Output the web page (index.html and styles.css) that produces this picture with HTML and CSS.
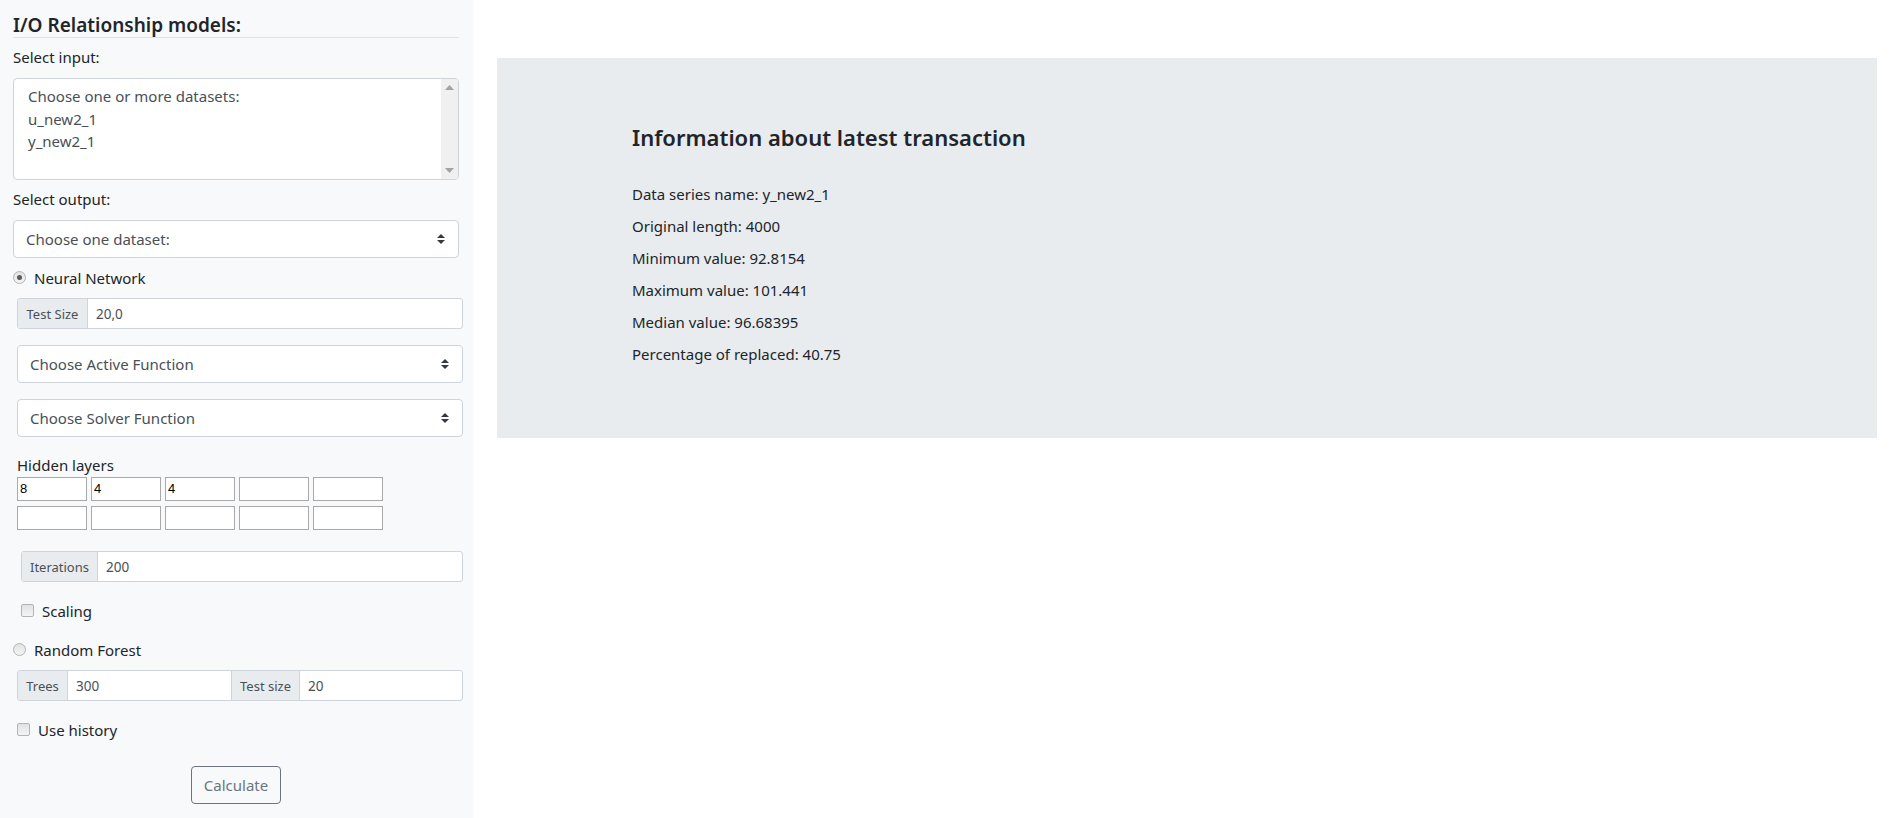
FILE: index.html
```html
<!DOCTYPE html>
<html>
<head>
<meta charset="utf-8">
<link rel="stylesheet" href="styles.css">
</head>
<body>
<div class="page">
  <aside class="sidebar">
    <h2 class="side-title">I/O Relationship models:</h2>
    <div class="label lbl-input">Select input:</div>
    <div class="multi">
      <div class="multi-opts">
        <div class="opt">Choose one or more datasets:</div>
        <div class="opt">u_new2_1</div>
        <div class="opt">y_new2_1</div>
      </div>
      <div class="scrollbar">
        <svg class="sb-arrow" width="9" height="5" viewBox="0 0 9 5"><polygon points="0,5 9,5 4.5,0" fill="#a3a3a3"/></svg>
        <svg class="sb-arrow" width="9" height="5" viewBox="0 0 9 5"><polygon points="0,0 9,0 4.5,5" fill="#a3a3a3"/></svg>
      </div>
    </div>
    <div class="label lbl-output">Select output:</div>
    <div class="select sel-output">
      <span>Choose one dataset:</span>
      <svg width="8" height="10" viewBox="0 0 4 5"><path fill="#343a40" d="M2 0L0 2h4zm0 5L0 3h4z"/></svg>
    </div>

    <div class="radio-row rr-nn">
      <span class="radio checked"></span>
      <span>Neural Network</span>
    </div>

    <div class="nested">
      <div class="igroup ig-test">
        <span class="addon addon-test">Test Size</span>
        <span class="ival">20,0</span>
      </div>
      <div class="select sel-fn sel-act">
        <span>Choose Active Function</span>
        <svg width="8" height="10" viewBox="0 0 4 5"><path fill="#343a40" d="M2 0L0 2h4zm0 5L0 3h4z"/></svg>
      </div>
      <div class="select sel-fn sel-solver">
        <span>Choose Solver Function</span>
        <svg width="8" height="10" viewBox="0 0 4 5"><path fill="#343a40" d="M2 0L0 2h4zm0 5L0 3h4z"/></svg>
      </div>
      <div class="hl-label">Hidden layers</div>
      <div class="hl-grid">
        <div class="hl-input">8</div>
        <div class="hl-input">4</div>
        <div class="hl-input">4</div>
        <div class="hl-input"></div>
        <div class="hl-input"></div>
        <div class="hl-input"></div>
        <div class="hl-input"></div>
        <div class="hl-input"></div>
        <div class="hl-input"></div>
        <div class="hl-input"></div>
      </div>
      <div class="igroup ig-iter">
        <span class="addon addon-iter">Iterations</span>
        <span class="ival">200</span>
      </div>
      <div class="check-row cr-scaling">
        <span class="checkbox"></span>
        <span>Scaling</span>
      </div>
    </div>

    <div class="radio-row rr-rf">
      <span class="radio"></span>
      <span>Random Forest</span>
    </div>

    <div class="nested">
      <div class="igroup ig-trees">
        <span class="addon addon-trees">Trees</span>
        <span class="ival ival-trees">300</span>
        <span class="addon addon-tsize">Test size</span>
        <span class="ival">20</span>
      </div>
      <div class="check-row cr-history">
        <span class="checkbox"></span>
        <span>Use history</span>
      </div>
    </div>

    <div class="btn-row">
      <button class="btn-calc">Calculate</button>
    </div>
  </aside>

  <main class="main">
    <section class="jumbo">
      <h4 class="jumbo-title">Information about latest transaction</h4>
      <p class="info">Data series name: y_new2_1</p>
      <p class="info">Original length: 4000</p>
      <p class="info">Minimum value: 92.8154</p>
      <p class="info">Maximum value: 101.441</p>
      <p class="info">Median value: 96.68395</p>
      <p class="info">Percentage of replaced: 40.75</p>
    </section>
  </main>
</div>
</body>
</html>
```

FILE: styles.css
```css
html, body {
  margin: 0;
  padding: 0;
  background: #ffffff;
}

body {
  font-family: "Noto Sans", "Open Sans", sans-serif;
  color: #212529;
  font-size: 15px;
}

.page {
  display: flex;
  min-height: 818px;
}

.sidebar {
  width: 473px;
  box-sizing: border-box;
  background: #f8f9fa;
  padding: 0 14px 0 13px;
  flex: none;
}

.side-title {
  margin: 13px 0 0 0;
  font-size: 19px;
  font-weight: 600;
  line-height: 24px;
  border-bottom: 1px solid #dee2e6;
  color: #212529;
}

.label {
  font-size: 15px;
  line-height: 24px;
}

.lbl-input { margin-top: 7px; }
.lbl-output { margin-top: 7px; }

.multi {
  margin-top: 9px;
  height: 102px;
  box-sizing: border-box;
  border: 1px solid #ced4da;
  border-radius: 4px;
  background: #ffffff;
  display: flex;
  overflow: hidden;
}

.multi-opts {
  flex: 1;
  padding: 6px 0 0 14px;
  color: #495057;
  font-size: 15px;
  line-height: 22.5px;
}

.scrollbar {
  width: 17px;
  background: #f0f0f0;
  display: flex;
  flex-direction: column;
  justify-content: space-between;
  align-items: center;
  padding: 6px 0;
  box-sizing: border-box;
}

.select {
  height: 38px;
  box-sizing: border-box;
  border: 1px solid #ced4da;
  border-radius: 4px;
  background: #ffffff;
  display: flex;
  align-items: center;
  justify-content: space-between;
  padding: 0 13px 0 12px;
  color: #495057;
  font-size: 15px;
}

.sel-output { margin-top: 9px; }

.radio-row, .check-row {
  display: flex;
  align-items: center;
  line-height: 24px;
  font-size: 15px;
}

.rr-nn { margin-top: 8px; }
.rr-rf { margin-top: 15px; }

.radio {
  width: 11px;
  height: 11px;
  border-radius: 50%;
  border: 1px solid #b4b4b4;
  background: linear-gradient(#e2e2e2, #f4f4f4);
  margin-right: 8px;
  margin-top: -2px;
  display: flex;
  align-items: center;
  justify-content: center;
}

.radio.checked::after {
  content: "";
  width: 5px;
  height: 5px;
  border-radius: 50%;
  background: #5a5a5a;
}

.checkbox {
  width: 11px;
  height: 11px;
  border-radius: 2px;
  border: 1px solid #b4b4b4;
  background: linear-gradient(#e2e2e2, #f4f4f4);
  margin-right: 8px;
  margin-top: -2px;
}

.nested {
  margin-left: 4px;
  margin-right: -4px;
}

.igroup {
  height: 31px;
  box-sizing: border-box;
  display: flex;
  border: 1px solid #ced4da;
  border-radius: 3px;
  background: #ffffff;
  font-size: 13px;
  color: #495057;
  overflow: hidden;
}

.addon {
  background: #e9ecef;
  border-right: 1px solid #ced4da;
  display: flex;
  align-items: center;
  justify-content: center;
  box-sizing: border-box;
}

.ival {
  display: flex;
  align-items: center;
  padding-left: 8px;
  flex: 1;
  font-size: 13.5px;
}

.ig-test { margin-top: 8px; }
.addon-test { width: 70px; }

.sel-act { margin-top: 16px; }
.sel-solver { margin-top: 16px; }

.hl-label {
  margin-top: 16px;
  line-height: 24px;
  font-size: 15px;
}

.hl-grid {
  display: grid;
  grid-template-columns: repeat(5, 70px);
  grid-auto-rows: 24px;
  column-gap: 4px;
  row-gap: 5px;
}

.hl-input {
  box-sizing: border-box;
  border: 1px solid #a9a9a9;
  background: #ffffff;
  font-family: "Liberation Sans", Arial, sans-serif;
  font-size: 13px;
  color: #000000;
  line-height: 22px;
  padding-left: 2px;
}

.ig-iter { margin-top: 21px; margin-left: 4px; }
.addon-iter { width: 76px; }

.cr-scaling { margin-top: 17px; margin-left: 4px; }

.ig-trees { margin-top: 8px; }
.addon-trees { width: 50px; }
.ival-trees { flex: none; width: 163px; box-sizing: border-box; }
.addon-tsize { width: 69px; border-left: 1px solid #ced4da; }

.cr-history { margin-top: 17px; }

.btn-row {
  display: flex;
  justify-content: center;
  margin-top: 24px;
}

.btn-calc {
  width: 90px;
  height: 38px;
  border: 1px solid #6c757d;
  border-radius: 4px;
  background: transparent;
  color: #6c757d;
  font-family: "Noto Sans", "Open Sans", sans-serif;
  font-size: 15px;
  padding: 0;
}

.main {
  flex: 1;
  padding: 58px 24px 0 24px;
}

.jumbo {
  background: #e9ecef;
  height: 380px;
  box-sizing: border-box;
  padding: 65px 0 0 135px;
}

.jumbo-title {
  margin: 0 0 27px 0;
  font-size: 22px;
  font-weight: 600;
  line-height: 28px;
  color: #212529;
}

.info {
  margin: 0;
  font-size: 15px;
  line-height: 32px;
  color: #212529;
}
```
